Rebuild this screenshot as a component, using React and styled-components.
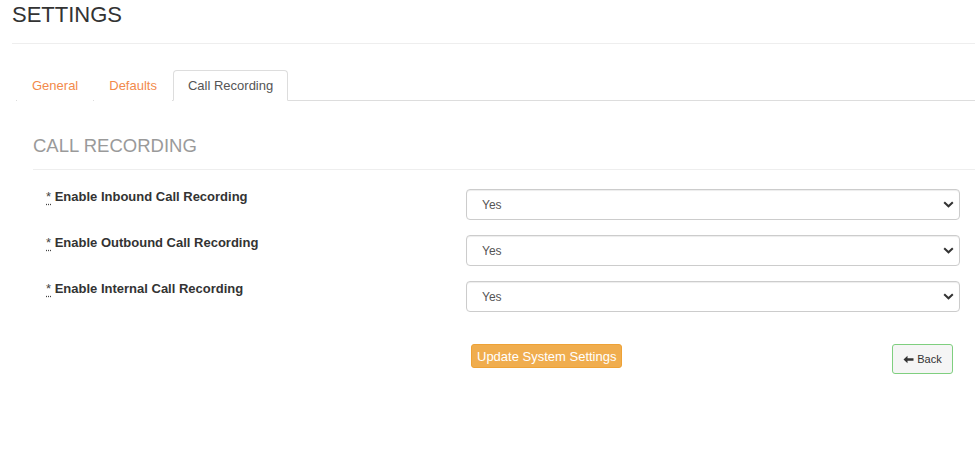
import React from 'react';
import styled, { createGlobalStyle } from 'styled-components';

const GlobalStyle = createGlobalStyle`
  html, body {
    margin: 0;
    padding: 0;
    background: #fff;
    font-family: "Liberation Sans", Arial, Helvetica, sans-serif;
    font-size: 13px;
    color: #333;
  }
`;

const Page = styled.div`
  width: 975px;
  padding-left: 12px;
  box-sizing: border-box;
`;

const Title = styled.h1`
  margin: 3px 0 0;
  font-size: 22px;
  line-height: 24px;
  font-weight: normal;
  color: #333;
`;

const Divider = styled.div`
  height: 1px;
  background: #eee;
  margin-top: 16px;
`;

const TabBar = styled.ul`
  list-style: none;
  display: flex;
  margin: 26px 0 0 4px;
  padding: 0 0 0 1px;
  border-bottom: 1px solid #ddd;
`;

const Tab = styled.li`
  margin-right: 1px;
  margin-bottom: -1px;
`;

const TabLink = styled.a`
  display: block;
  padding: 5px 14px 4px;
  line-height: 20px;
  font-size: 13px;
  text-decoration: none;
  cursor: pointer;
  border: 1px solid ${p => (p.$active ? '#ddd' : 'transparent')};
  border-bottom-color: ${p => (p.$active ? '#fff' : 'transparent')};
  border-radius: 4px 4px 0 0;
  background: #fff;
  color: ${p => (p.$active ? '#555' : '#f28a4b')};
`;

const TabPane = styled.div`
  padding-left: 21px;
`;

const SectionTitle = styled.h3`
  margin: 35px 0 0;
  font-size: 18.5px;
  line-height: 20px;
  font-weight: normal;
  color: #9a9a9a;
  padding-bottom: 13px;
  border-bottom: 1px solid #eee;
`;

const Form = styled.div`
  padding: 19px 0 0 13px;
`;

const Row = styled.div`
  display: flex;
  align-items: flex-start;
  margin-bottom: 15px;
`;

const Label = styled.label`
  width: 420px;
  flex-shrink: 0;
  font-weight: bold;
  font-size: 13px;
  line-height: 16px;
  color: #333;
`;

const Required = styled.abbr`
  font-weight: normal;
  font-size: 13px;
  text-decoration: underline dotted;
  text-underline-offset: 3px;
  color: #444;
  cursor: help;
`;

const SelectWrap = styled.div`
  position: relative;
  width: 494px;
`;

const Select = styled.select`
  appearance: none;
  width: 100%;
  height: 31px;
  box-sizing: border-box;
  border: 1px solid #ccc;
  border-radius: 4px;
  box-shadow: inset 0 1px 1px rgba(0, 0, 0, 0.075);
  padding: 0 30px 0 15px;
  font-family: inherit;
  font-size: 12px;
  color: #555;
  background: #fff;
  outline: none;
`;

const Chevron = styled.svg`
  position: absolute;
  right: 6px;
  top: 12px;
  pointer-events: none;
`;

const Actions = styled.div`
  display: flex;
  padding-top: 17px;
`;

const Spacer = styled.div`
  width: 420px;
  flex-shrink: 0;
`;

const ActionArea = styled.div`
  width: 494px;
  display: flex;
  justify-content: space-between;
  align-items: flex-start;
  padding: 0 7px 0 5px;
  box-sizing: border-box;
`;

const UpdateButton = styled.button`
  height: 24px;
  padding: 0 5px;
  border: 1px solid #eea236;
  border-radius: 3px;
  background: #f0ad4e;
  color: #fff;
  font-family: inherit;
  font-size: 13px;
  cursor: pointer;
`;

const BackButton = styled.button`
  height: 30px;
  width: 61px;
  display: flex;
  align-items: center;
  justify-content: center;
  gap: 3px;
  border: 1px solid #7fcf7f;
  border-radius: 3px;
  background: #f5f5f5;
  color: #333;
  font-family: inherit;
  font-size: 11px;
  cursor: pointer;
`;

const fields = [
  'Enable Inbound Call Recording',
  'Enable Outbound Call Recording',
  'Enable Internal Call Recording',
];

export default function App() {
  return (
    <Page>
      <GlobalStyle />
      <Title>SETTINGS</Title>
      <Divider />
      <TabBar>
        <Tab><TabLink>General</TabLink></Tab>
        <Tab><TabLink>Defaults</TabLink></Tab>
        <Tab><TabLink $active>Call Recording</TabLink></Tab>
      </TabBar>
      <TabPane>
        <SectionTitle>CALL RECORDING</SectionTitle>
        <Form>
          {fields.map(f => (
            <Row key={f}>
              <Label>
                <Required title="required">*</Required> {f}
              </Label>
              <SelectWrap>
                <Select defaultValue="Yes">
                  <option>Yes</option>
                  <option>No</option>
                </Select>
                <Chevron width="11" height="7" viewBox="0 0 11 7">
                  <path d="M1.2 1.2 L5.5 5.3 L9.8 1.2" fill="none" stroke="#333" strokeWidth="2" />
                </Chevron>
              </SelectWrap>
            </Row>
          ))}
          <Actions>
            <Spacer />
            <ActionArea>
              <UpdateButton>Update System Settings</UpdateButton>
              <BackButton>
                <svg width="11" height="9" viewBox="0 0 11 9">
                  <path d="M0.5 4.5 L4.5 0.7 L4.5 3.2 L10.5 3.2 L10.5 5.8 L4.5 5.8 L4.5 8.3 Z" fill="#333" />
                </svg>
                Back
              </BackButton>
            </ActionArea>
          </Actions>
        </Form>
      </TabPane>
    </Page>
  );
}
